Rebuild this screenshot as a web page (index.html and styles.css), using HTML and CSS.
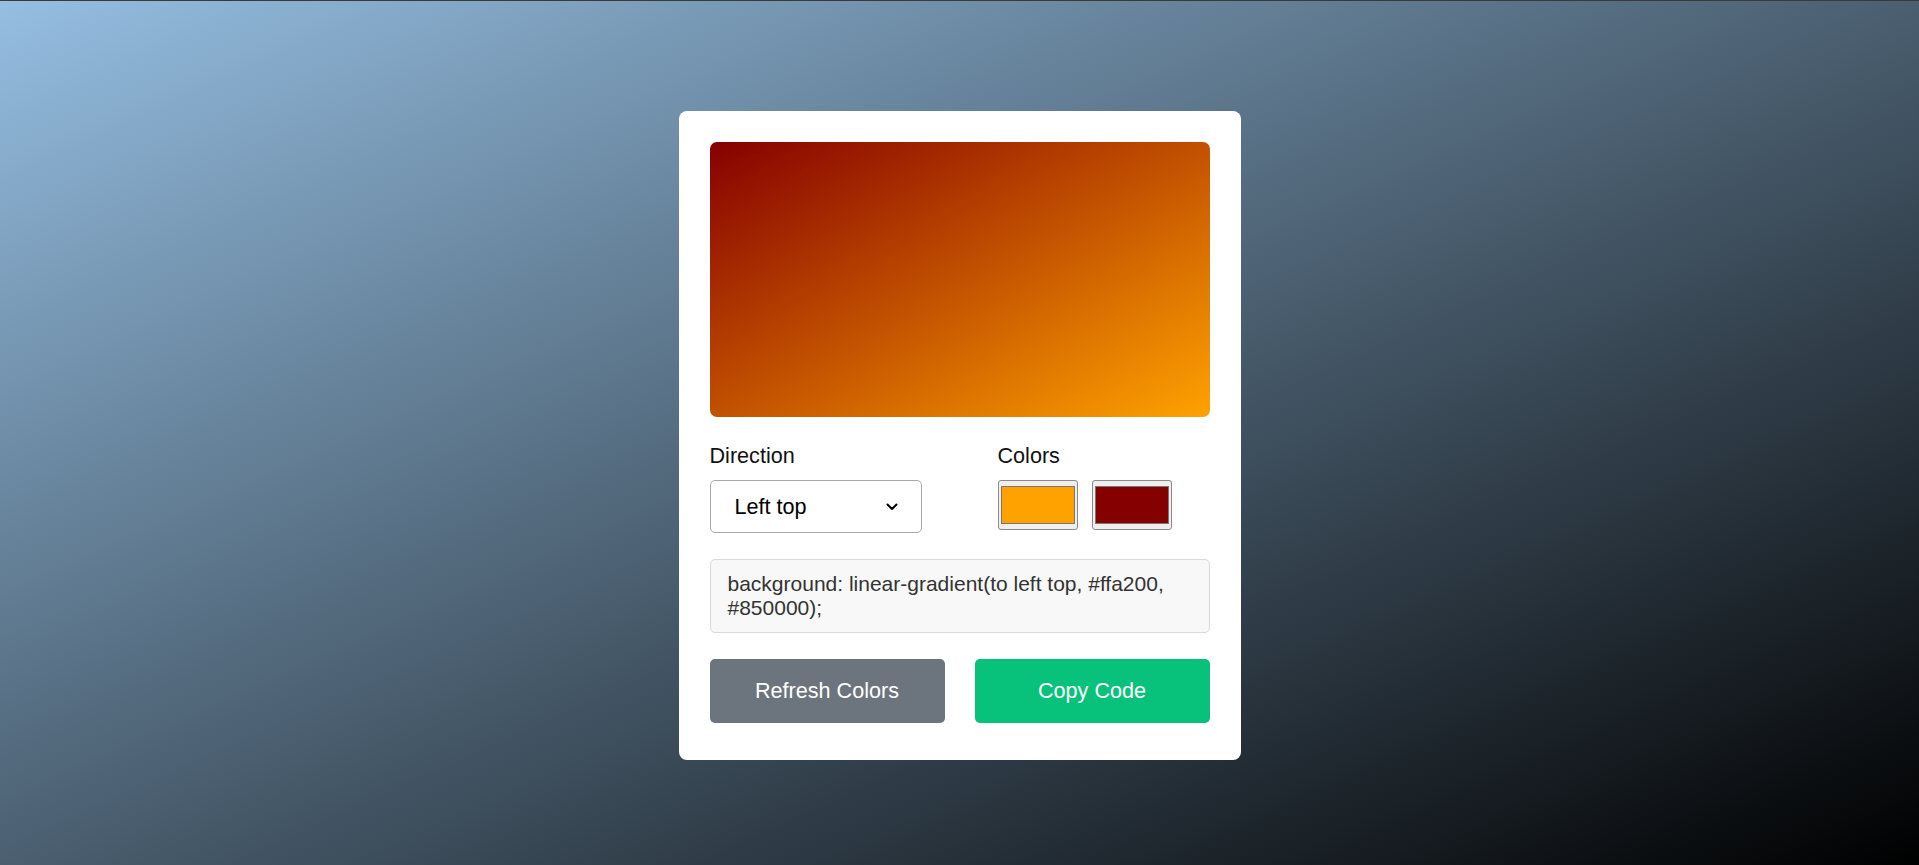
FILE: index.html
```html
<!DOCTYPE html>
<html lang="en">
<head>
<meta charset="utf-8">
<title>Gradient Generator</title>
<link rel="stylesheet" href="styles.css">
</head>
<body class="page">
  <main class="card">
    <div class="preview"></div>
    <div class="controls">
      <div class="field">
        <label class="label" for="direction">Direction</label>
        <div class="select-wrap">
          <select class="select" id="direction">
            <option>Top</option>
            <option>Right top</option>
            <option>Right</option>
            <option>Right bottom</option>
            <option>Bottom</option>
            <option>Left bottom</option>
            <option>Left</option>
            <option selected>Left top</option>
          </select>
          <svg class="chevron" width="12" height="8" viewBox="0 0 12 8" aria-hidden="true">
            <path d="M1.5 1.5 L6 6 L10.5 1.5" fill="none" stroke="#000" stroke-width="2" stroke-linecap="round" stroke-linejoin="round"/>
          </svg>
        </div>
      </div>
      <div class="field">
        <span class="label">Colors</span>
        <div class="colors">
          <input type="color" class="swatch" value="#ffa200">
          <input type="color" class="swatch" value="#850000">
        </div>
      </div>
    </div>
    <div class="code">background: linear-gradient(to left top, #ffa200, #850000);</div>
    <div class="buttons">
      <button class="btn btn-refresh" type="button">Refresh Colors</button>
      <button class="btn btn-copy" type="button">Copy Code</button>
    </div>
  </main>
</body>
</html>
```

FILE: styles.css
```css
* {
  box-sizing: border-box;
}

html {
  margin: 0;
  height: 100%;
}

.page {
  margin: 0;
  min-height: 100vh;
  padding-top: 5px;
  border-top: 1px solid #3a3a3a;
  display: flex;
  align-items: center;
  justify-content: center;
  background: linear-gradient(to bottom right, #95bee1, #000000);
  font-family: "Liberation Sans", Arial, sans-serif;
  color: #111;
}

.card {
  width: 562px;
  background: #fff;
  border-radius: 8px;
  padding: 31px 31px 37px;
  display: flex;
  flex-direction: column;
  gap: 26px;
}

.preview {
  height: 275px;
  border-radius: 7px;
  background: linear-gradient(to left top, #ffa200, #850000);
}

.controls {
  display: grid;
  grid-template-columns: 1fr 1fr;
  column-gap: 76px;
}

.field {
  display: flex;
  flex-direction: column;
  gap: 11px;
}

.label {
  font-size: 21.6px;
  line-height: normal;
  color: #111;
}

.select-wrap {
  position: relative;
}

.select {
  -webkit-appearance: none;
  appearance: none;
  width: 100%;
  height: 53px;
  margin: 0;
  padding: 0 40px 0 24px;
  border: 1px solid #a9a9a9;
  border-radius: 5px;
  background: #fff;
  font-family: "Liberation Sans", Arial, sans-serif;
  font-size: 21.6px;
  color: #000;
}

.chevron {
  position: absolute;
  right: 24px;
  top: 23px;
  pointer-events: none;
}

.colors {
  display: flex;
  gap: 14px;
}

.swatch {
  -webkit-appearance: none;
  appearance: none;
  width: 80px;
  height: 50px;
  margin: 0;
  padding: 0;
  border: 1px solid #8a8a8a;
  border-radius: 3px;
  background: #efefef;
  cursor: pointer;
}

.swatch::-webkit-color-swatch-wrapper {
  padding: 5px 2px;
}

.swatch::-webkit-color-swatch {
  border: 1px solid #777;
  border-radius: 0;
}

.code {
  padding: 12px 17px;
  border: 1px solid #dadada;
  border-radius: 5px;
  background: #f8f8f8;
  font-size: 21px;
  line-height: normal;
  color: #333;
}

.buttons {
  display: grid;
  grid-template-columns: 1fr 1fr;
  column-gap: 30px;
}

.btn {
  height: 64px;
  margin: 0;
  border: none;
  border-radius: 5px;
  font-family: "Liberation Sans", Arial, sans-serif;
  font-size: 21.6px;
  color: #fff;
  cursor: pointer;
}

.btn-refresh {
  background: #6c757d;
}

.btn-copy {
  background: #08c27b;
}
```
